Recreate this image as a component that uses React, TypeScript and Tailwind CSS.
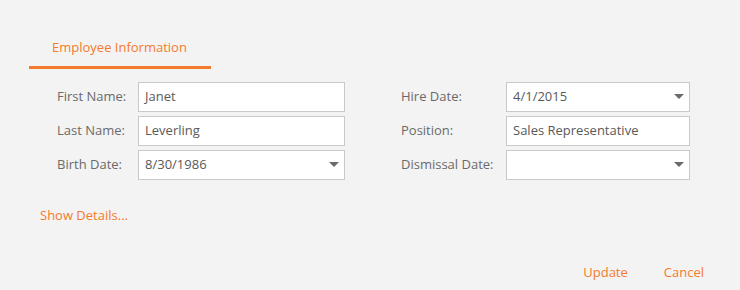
import React from "react";

const font = { fontFamily: '"Segoe UI", "Open Sans", "Noto Sans", sans-serif' };

function Arrow() {
  return (
    <svg width="10" height="6" viewBox="0 0 10 6" className="shrink-0">
      <path d="M0 0 H10 L5 5 Z" fill="#6b6b6b" />
    </svg>
  );
}

function Field({ label, value, labelW, inputW, dropdown }: { label: string; value: string; labelW: string; inputW: string; dropdown?: boolean }) {
  return (
    <div className="flex items-center h-[30px]">
      <div className={`${labelW} text-[13px] text-[#6a6a6a] shrink-0`}>{label}</div>
      <div className={`${inputW} h-[30px] bg-white border border-[#c9c9c9] flex items-center pl-[6px] pr-[5px]`}>
        <span className="flex-1 text-[13px] text-[#595959]">{value}</span>
        {dropdown && <Arrow />}
      </div>
    </div>
  );
}

export default function App() {
  return (
    <div style={font} className="w-[740px] h-[290px] bg-[#f3f3f3] relative overflow-hidden">
      <div className="pt-[34px] pl-[29px]">
        <div className="inline-flex flex-col">
          <div className="px-[23px] text-[13px] text-[#f47b2c] h-[20px] leading-[20px]">Employee Information</div>
          <div className="h-[3px] mt-[9px] bg-[#f47b2c] w-[182px]"></div>
        </div>
      </div>
      <div className="flex mt-[13px] pl-[57px] gap-[56px]">
        <div className="flex flex-col gap-[4px]">
          <Field label="First Name:" value="Janet" labelW="w-[81px]" inputW="w-[207px]" />
          <Field label="Last Name:" value="Leverling" labelW="w-[81px]" inputW="w-[207px]" />
          <Field label="Birth Date:" value="8/30/1986" labelW="w-[81px]" inputW="w-[207px]" dropdown />
        </div>
        <div className="flex flex-col gap-[4px]">
          <Field label="Hire Date:" value="4/1/2015" labelW="w-[105px]" inputW="w-[184px]" dropdown />
          <Field label="Position:" value="Sales Representative" labelW="w-[105px]" inputW="w-[184px]" />
          <Field label="Dismissal Date:" value="" labelW="w-[105px]" inputW="w-[184px]" dropdown />
        </div>
      </div>
      <div className="pl-[40px] mt-[25px] text-[13px] text-[#f47b2c] h-[20px] leading-[20px]">Show Details...</div>
      <div className="flex justify-end pr-[36px] mt-[37px] gap-[36px] text-[13px] text-[#f47b2c] leading-[20px]">
        <span>Update</span>
        <span>Cancel</span>
      </div>
    </div>
  );
}
